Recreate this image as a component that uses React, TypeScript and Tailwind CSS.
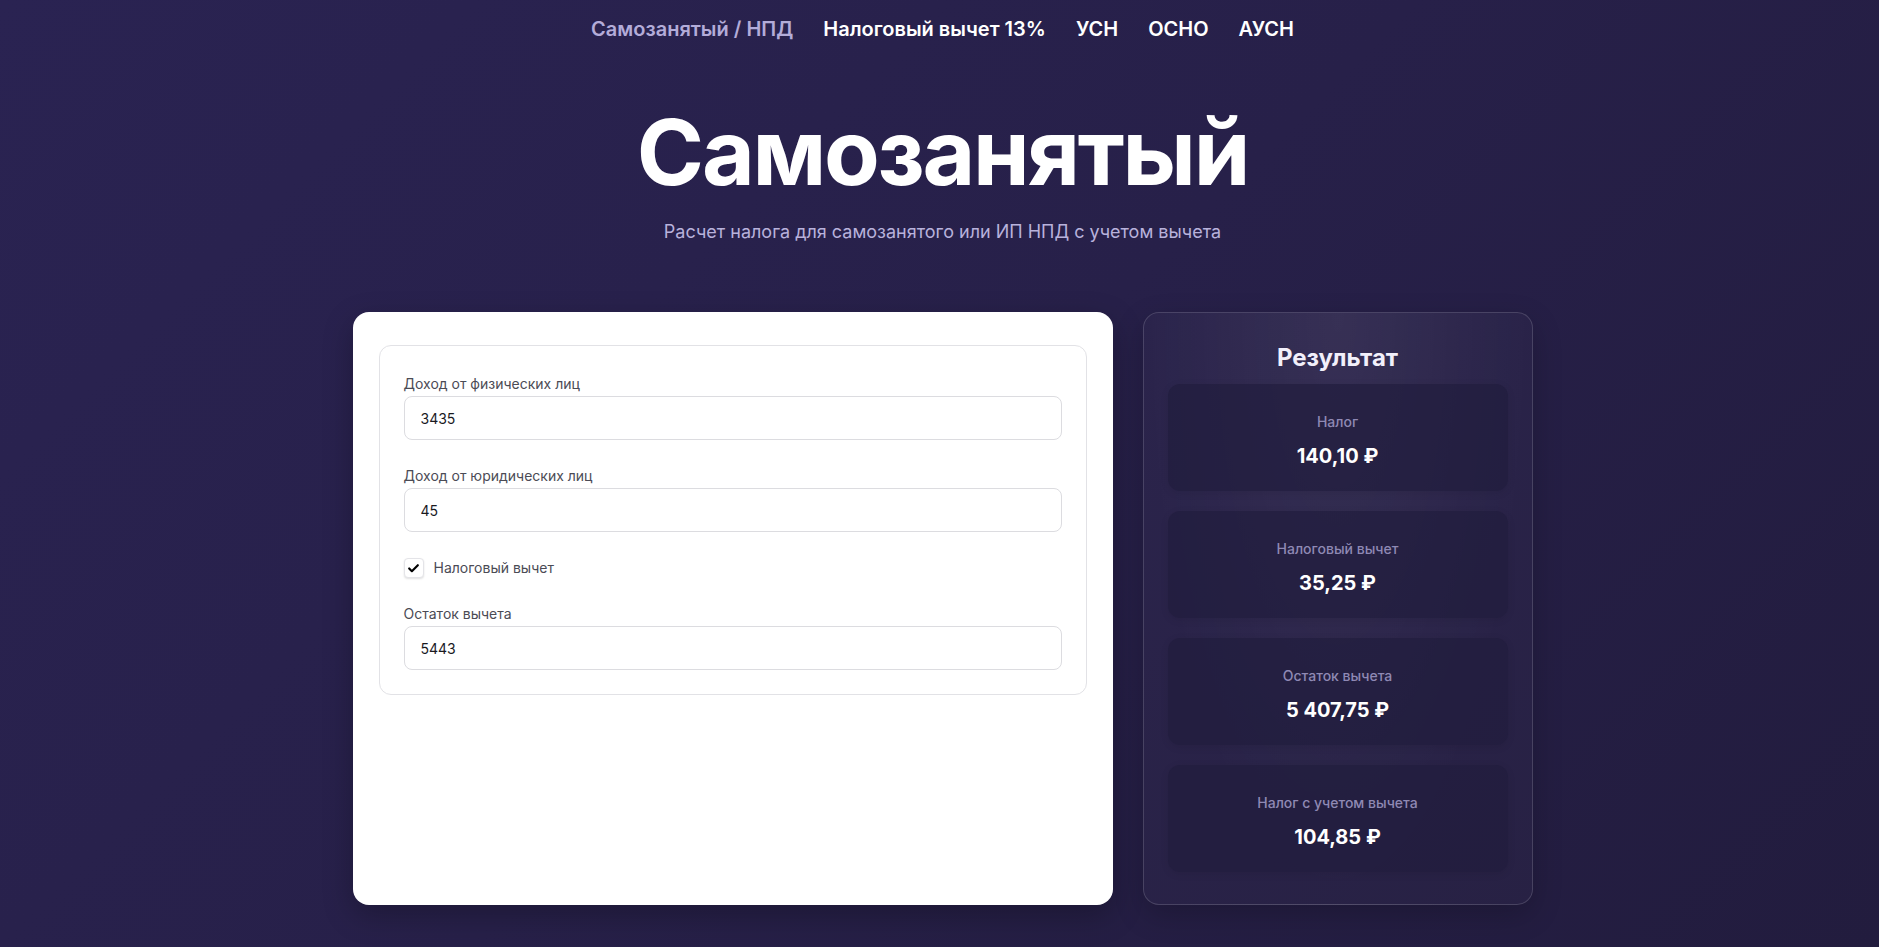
import { Check } from "lucide-react";

const navItems = [
  { label: "Самозанятый / НПД", active: true },
  { label: "Налоговый вычет 13%", active: false },
  { label: "УСН", active: false },
  { label: "ОСНО", active: false },
  { label: "АУСН", active: false },
];

const fields = [
  { id: "individuals", label: "Доход от физических лиц", value: "3435" },
  { id: "companies", label: "Доход от юридических лиц", value: "45" },
];

const results = [
  { label: "Налог", value: "140,10 ₽" },
  { label: "Налоговый вычет", value: "35,25 ₽" },
  { label: "Остаток вычета", value: "5 407,75 ₽" },
  { label: "Налог с учетом вычета", value: "104,85 ₽" },
];

function Field({ id, label, value }: { id: string; label: string; value: string }) {
  return (
    <div className="flex flex-col">
      <label htmlFor={id} className="mb-[2px] text-sm leading-5 text-[#4b4b55]">
        {label}
      </label>
      <input
        id={id}
        readOnly
        value={value}
        className="h-11 w-full rounded-lg border border-[#dcdce0] bg-white px-4 text-sm text-[#1a1a1f] outline-none"
      />
    </div>
  );
}

function ResultCard({ label, value }: { label: string; value: string }) {
  return (
    <div className="flex h-[107px] flex-col items-center rounded-xl bg-[#211c3d]/70 pt-7 shadow-[0_2px_8px_rgba(0,0,0,0.08)]">
      <span className="text-sm leading-5 font-medium text-[#8f89b4]">{label}</span>
      <span className="mt-[10px] text-xl leading-7 font-bold text-white">{value}</span>
    </div>
  );
}

export default function App() {
  return (
    <div className="min-h-[947px] bg-[linear-gradient(135deg,#2a2352_0%,#272049_50%,#221c3e_100%)] pl-[6px] pb-10 font-['Inter',sans-serif]">
      <nav className="flex justify-center gap-[30px] pt-[15px]">
        {navItems.map(item => (
          <a
            key={item.label}
            href="#"
            className={
              item.active
                ? "text-xl leading-7 font-semibold text-[#b3acd9]"
                : "text-xl leading-7 font-semibold text-white"
            }
          >
            {item.label}
          </a>
        ))}
      </nav>

      <header className="mt-[64px] flex flex-col items-center">
        <h1 className="text-[91px] leading-none font-bold tracking-tight text-white">Самозанятый</h1>
        <p className="mt-[20px] text-lg leading-7 text-[#b8b2dc]">
          Расчет налога для самозанятого или ИП НПД с учетом вычета
        </p>
      </header>

      <main className="mt-[66px] grid grid-cols-[760px_390px] justify-center gap-[30px]">
        <section className="rounded-2xl bg-white px-[26px] pt-[33px] shadow-[0_10px_30px_rgba(0,0,0,0.25)]">
          <div className="flex flex-col gap-[26px] rounded-xl border border-[#e2e2e6] px-6 pt-7 pb-6">
            {fields.map(field => (
              <Field key={field.id} {...field} />
            ))}
            <label className="flex h-5 items-center gap-[10px]">
              <span className="flex size-5 items-center justify-center rounded-[4px] border border-[#e4e4e8] bg-white shadow-[0_1px_2px_rgba(0,0,0,0.12)]">
                <Check className="size-[13px] text-black" strokeWidth={4} />
              </span>
              <span className="text-sm leading-5 text-[#4b4b55]">Налоговый вычет</span>
            </label>
            <Field id="rest" label="Остаток вычета" value="5443" />
          </div>
        </section>

        <aside className="rounded-2xl border border-white/15 bg-[radial-gradient(ellipse_at_50%_0%,rgba(255,255,255,0.08),rgba(255,255,255,0.02)_70%)] px-6 pt-[29px] pb-8 shadow-[0_10px_30px_rgba(0,0,0,0.2)]">
          <h2 className="mb-[10px] text-center text-2xl leading-8 font-bold text-[#f2f0fb]">Результат</h2>
          <div className="flex flex-col gap-5">
            {results.map(result => (
              <ResultCard key={result.label} {...result} />
            ))}
          </div>
        </aside>
      </main>
    </div>
  );
}
